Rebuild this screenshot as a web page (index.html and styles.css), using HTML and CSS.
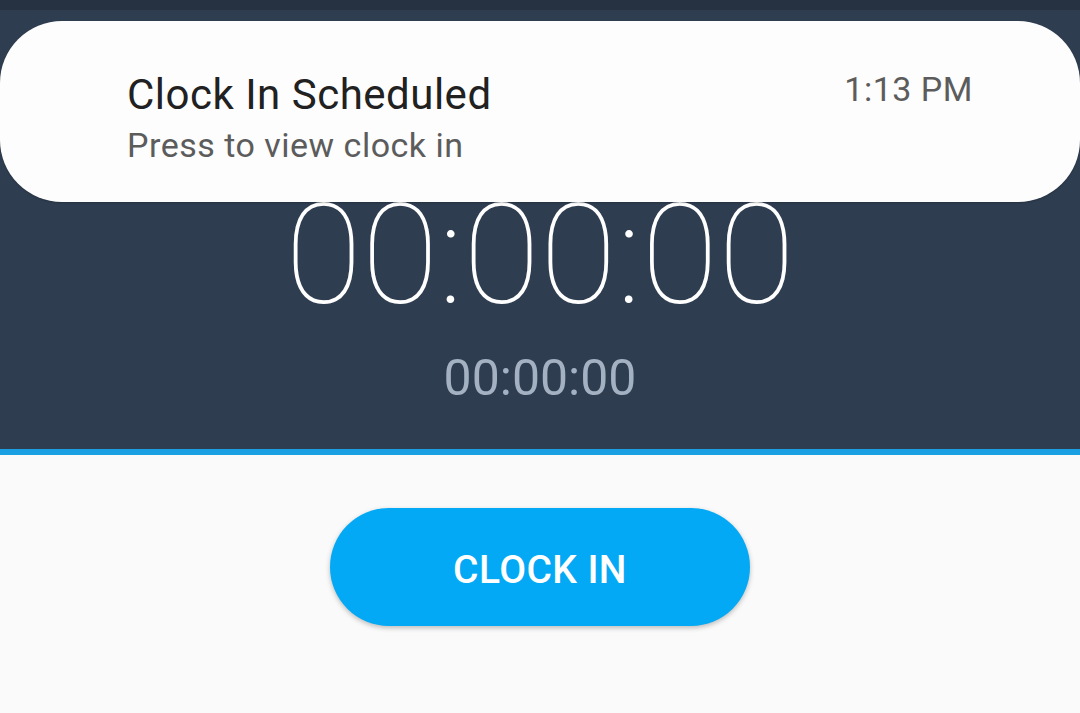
FILE: index.html
```html
<!DOCTYPE html>
<html lang="en">

<head>
    <meta charset="UTF-8">
    <meta name="viewport" content="width=device-width, initial-scale=1.0">
    <title>Time Clock</title>
    <link rel="stylesheet" href="styles.css">
</head>

<body>

    <div class="status-strip"></div>

    <div class="timer-panel">
        <div class="timer-main" id="elapsed">00:00:00</div>
        <div class="timer-sub" id="break">00:00:00</div>
    </div>

    <div class="actions">
        <button class="clock-btn" id="clockBtn">CLOCK IN</button>
    </div>

    <!-- heads-up notification sits on top of the timer panel -->
    <div class="notification">
        <div class="notification-text">
            <div class="notification-title">Clock In Scheduled</div>
            <div class="notification-body">Press to view clock in</div>
        </div>
        <div class="notification-time">1:13 PM</div>
    </div>

</body>

</html>
```

FILE: styles.css
```css
* {
    box-sizing: border-box;
    margin: 0;
    padding: 0;
}

body {
    font-family: Roboto, "Noto Sans", sans-serif;
    background-color: #fafafa;
    height: 100vh;
    overflow: hidden;
    position: relative;
}

.status-strip {
    height: 10px;
    background-color: #263241;
}

.timer-panel {
    background-color: #2e3d50;
    border-bottom: 6px solid #1b9fe3;
    padding-top: 175px;
    height: 445px;
    text-align: center;
}

.timer-main {
    font-size: 140px;
    font-weight: 100;
    line-height: 1;
    color: #fff;
}

.timer-sub {
    margin-top: 28px;
    font-size: 50px;
    line-height: 1;
    color: #a3b1c2;
}

.actions {
    display: flex;
    justify-content: center;
    padding-top: 53px;
}

.clock-btn {
    width: 420px;
    height: 118px;
    padding-top: 5px;
    border: none;
    border-radius: 59px;
    background-color: #03a9f4;
    color: #fff;
    font-family: Roboto, sans-serif;
    font-size: 39px;
    font-weight: 500;
    letter-spacing: 0.4px;
    box-shadow: 0 2px 5px rgba(0, 0, 0, 0.25);
    cursor: pointer;
}

.notification {
    position: absolute;
    top: 21px;
    left: 0;
    right: 0;
    height: 181px;
    display: flex;
    justify-content: space-between;
    align-items: flex-start;
    padding: 49px 107px 0 127px;
    background-color: #fdfdfd;
    border-radius: 62px;
    box-shadow: 0 1px 2px rgba(0, 0, 0, 0.2);
    letter-spacing: 0.5px;
}

.notification-title {
    font-size: 42px;
    line-height: 1.2;
    color: #212121;
}

.notification-body {
    margin-top: 5px;
    font-size: 34px;
    line-height: 1.2;
    color: #5c5c5c;
}

.notification-time {
    margin-top: -1px;
    font-size: 34px;
    line-height: 1.2;
    color: #5c5c5c;
}
```
